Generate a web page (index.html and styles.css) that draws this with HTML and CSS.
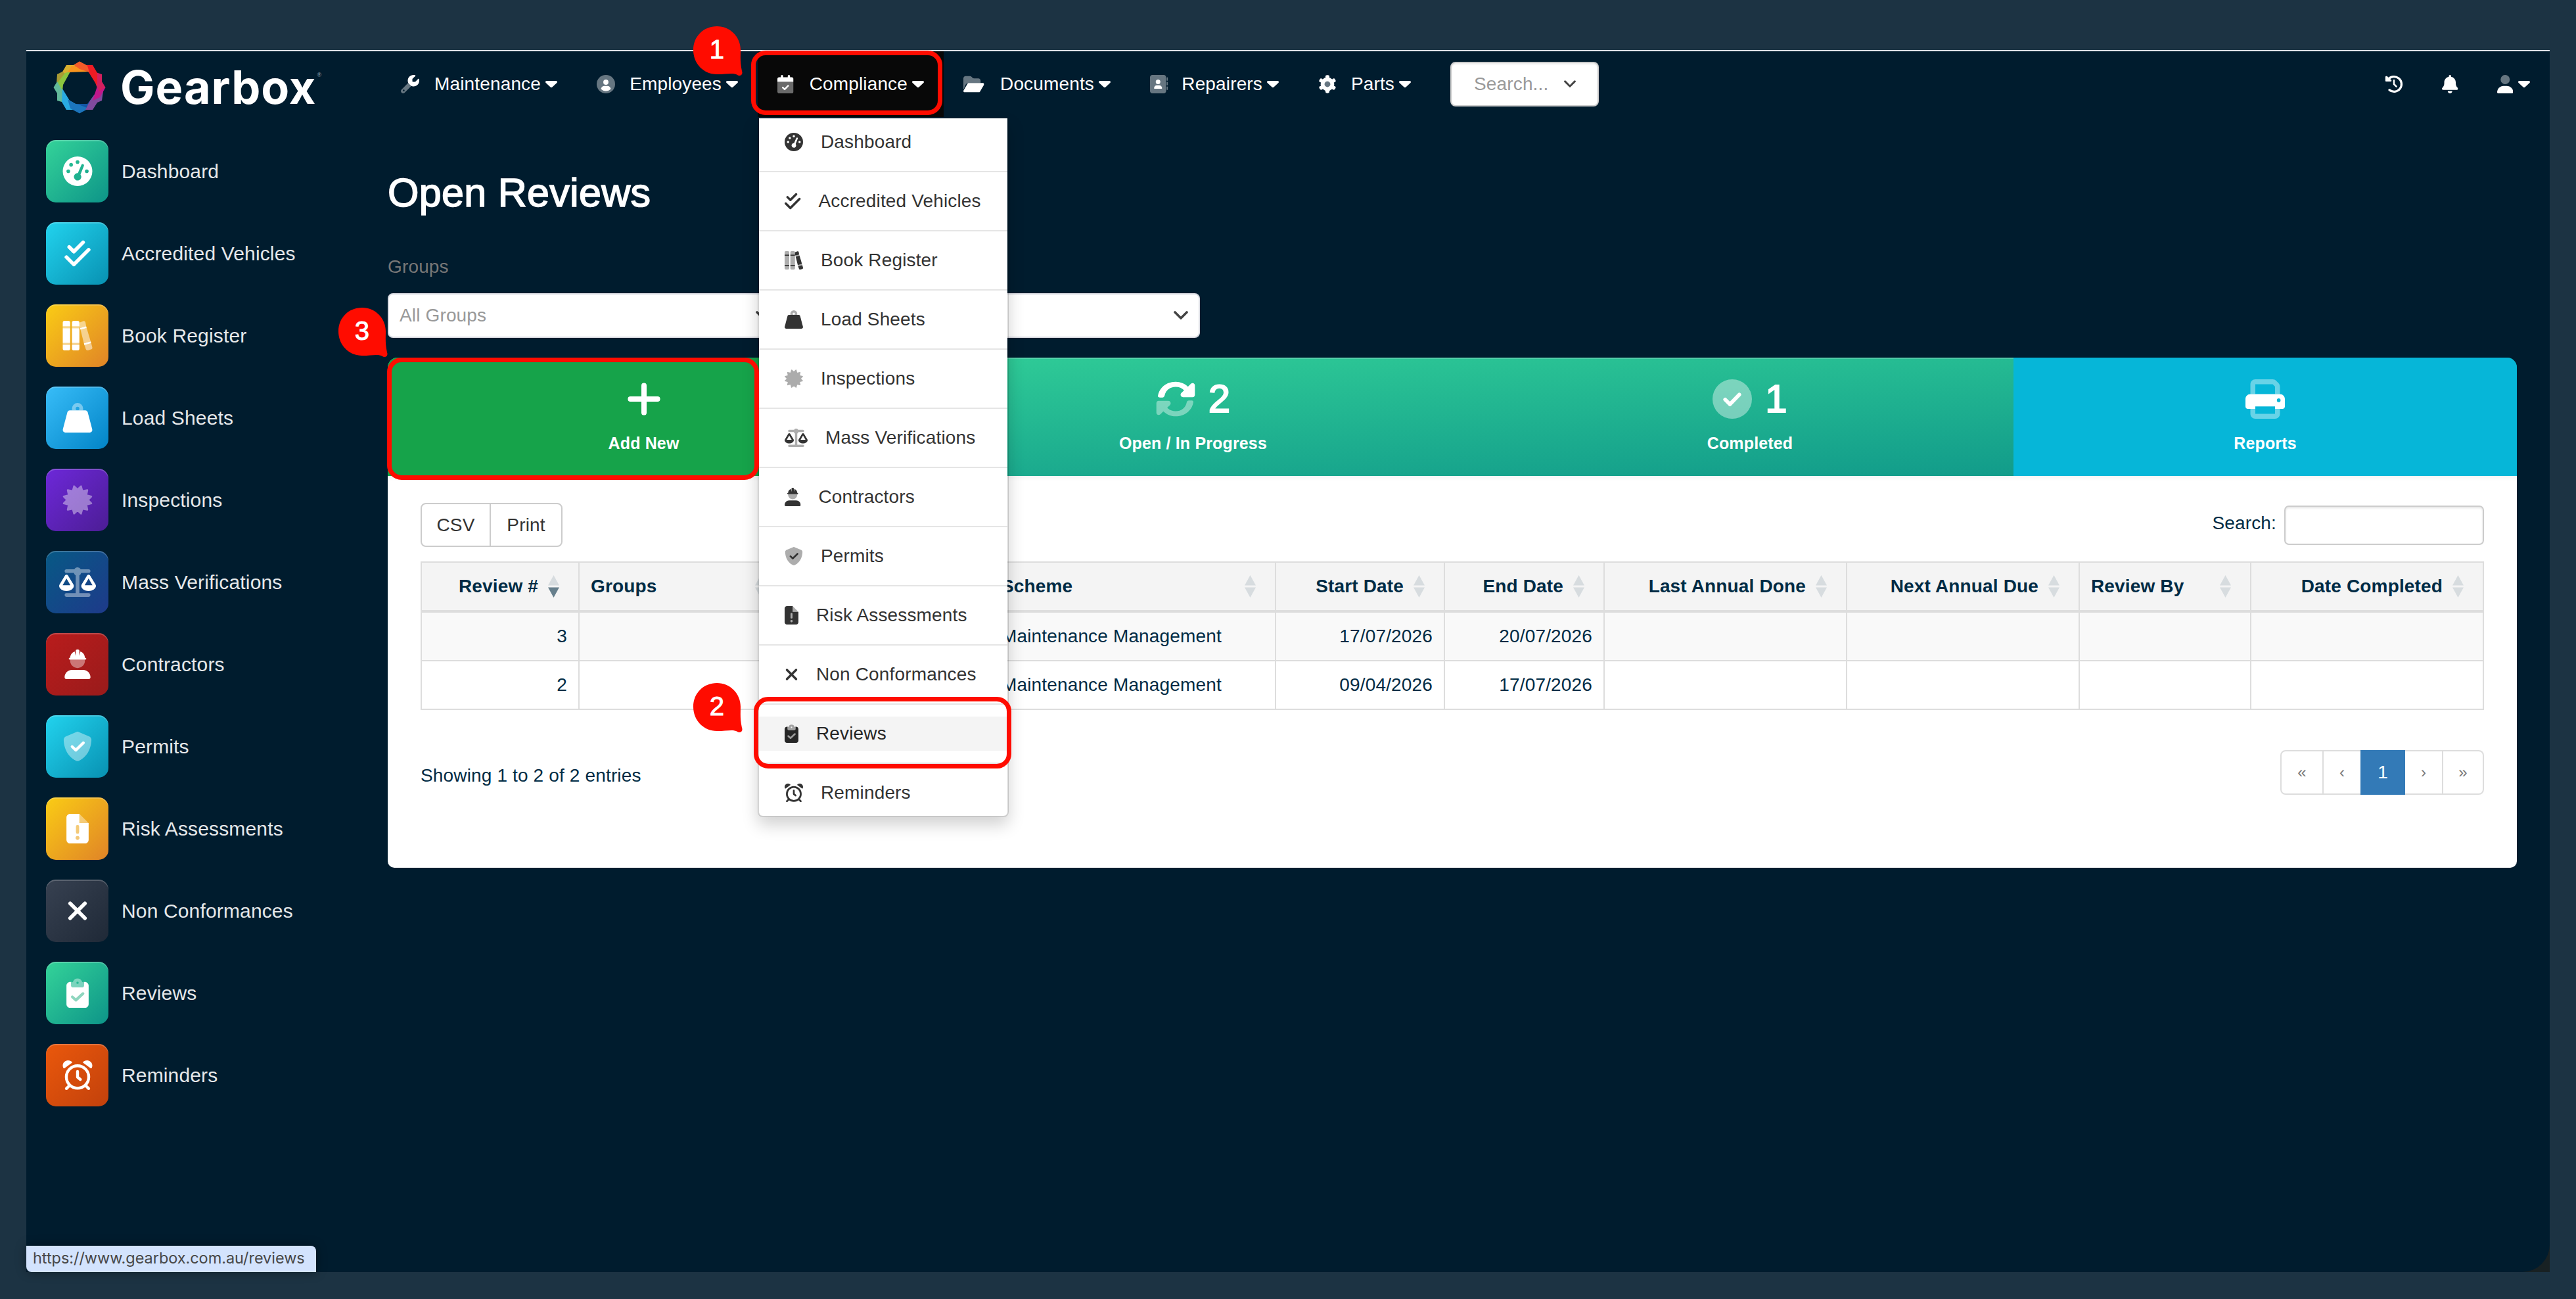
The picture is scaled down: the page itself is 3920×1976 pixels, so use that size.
FILE: index.html
```html
<!DOCTYPE html>
<html lang="en">
<head>
    <meta charset="UTF-8">
    <meta name="viewport" content="width=device-width, initial-scale=1.0">
    <title>Open Reviews - Gearbox</title>
    <link rel="stylesheet" href="styles.css">
</head>
<body>
    <!-- icon set -->
    <svg class="icon-defs" width="0" height="0">
        <symbol id="gauge" viewBox="0 0 512 512"><path fill-rule="evenodd" d="M0 256a256 256 0 1 1 512 0A256 256 0 1 1 0 256zM288 96a32 32 0 1 0-64 0 32 32 0 1 0 64 0zM176 144a32 32 0 1 0-64 0 32 32 0 1 0 64 0zM128 256a32 32 0 1 0-64 0 32 32 0 1 0 64 0zM448 256a32 32 0 1 0-64 0 32 32 0 1 0 64 0zM262 288L323 144a24 24 0 0 1 44 18L307 312A64 64 0 1 1 262 288z"/></symbol>
        <symbol id="check-double" viewBox="0 0 448 512"><path class="line" stroke-width="64" d="M80 144l80 80L320 64M32 320l128 128L416 192"/></symbol>
        <symbol id="books" viewBox="0 0 512 512">
            <path class="layer-a" d="M32 0h64a32 32 0 0 1 32 32v64H0V32A32 32 0 0 1 32 0zM0 128h128v256H0zM0 416h128v64a32 32 0 0 1-32 32H32a32 32 0 0 1-32-32zM192 0h64a32 32 0 0 1 32 32v64H160V32a32 32 0 0 1 32-32zM160 128h128v256H160zM160 416h128v64a32 32 0 0 1-32 32h-64a32 32 0 0 1-32-32zM299 124l106-30 9 31-106 30zM366 390l117-34 9 31-117 34z"/>
            <path class="layer-b" d="M0 96h128v32H0zM0 384h128v32H0zM160 96h128v32H160zM160 384h128v32H160zM288 32l68-27c16-4 32 4 37 22l12 67-106 30-11-30zM308 155l106-30 69 231-117 34zM375 421l117-34 19 70c5 18-6 34-22 39l-52 15c-18 4-34-6-38-22z"/>
        </symbol>
        <symbol id="weight" viewBox="0 0 512 512">
            <path class="fade" fill-rule="evenodd" d="M160 128v-32a96 96 0 1 1 192 0v32zM288 96a32 32 0 1 0-64 0 32 32 0 1 0 64 0z"/>
            <path d="M122 128h268c20 0 36 12 42 32l78 296c6 30-14 56-42 56H44c-28 0-48-26-42-56l78-296c6-20 22-32 42-32z"/>
        </symbol>
        <symbol id="certificate" viewBox="0 0 512 512"><path class="fade" stroke="currentColor" stroke-width="30" stroke-linejoin="round" d="M256 76L316 18 339 104 426 86 408 173 494 196 436 256 494 316 408 339 426 426 339 408 316 494 256 436 196 494 173 408 86 426 104 339 18 316 76 256 18 196 104 173 86 86 173 104 196 18z"/></symbol>
        <symbol id="scale" viewBox="0 0 640 512">
            <path class="fade" d="M128 32h136a64 64 0 0 1 112 0h136a32 32 0 0 1 0 64H384a70 70 0 0 1-32 42v310h160a32 32 0 0 1 0 64H128a32 32 0 0 1 0-64h160V138a70 70 0 0 1-32-42H128a32 32 0 0 1 0-64z"/>
            <path fill-rule="evenodd" d="M128 128c-14 0-24 8-30 18L8 296c-6 10-8 20-8 32 8 48 60 82 128 82s120-34 128-82c0-12-2-22-8-32L158 146c-6-10-16-18-30-18zM128 192l68 118H60zM512 128c-14 0-24 8-30 18l-90 150c-6 10-8 20-8 32 8 48 60 82 128 82s120-34 128-82c0-12-2-22-8-32l-90-150c-6-10-16-18-30-18zM512 192l68 118H444z"/>
        </symbol>
        <symbol id="helmet" viewBox="0 0 448 512">
            <path class="fade" d="M96 176h256v16a128 128 0 0 1-256 0z"/>
            <path d="M192 24a24 24 0 0 1 24-24h16a24 24 0 0 1 24 24v88l18-78c45 18 77 60 77 108 14 0 25 10 25 18s-10 16-20 16H92c-10 0-20-6-20-16s11-18 25-18c0-48 32-90 77-108l18 78zM0 482c0-72 56-130 128-130h192c72 0 128 58 128 130 0 17-13 30-30 30H30c-17 0-30-13-30-30z"/>
        </symbol>
        <symbol id="shield" viewBox="0 0 512 512">
            <path class="fade" d="M256 0c4.600 0 9.200 1 13.400 2.900l188.300 79.900c22 9.300 38.400 31 38.300 57.200-.5 99.200-41.300 280.700-213.600 363.200-16.700 8-36.100 8-52.800 0C57.300 420.700 16.500 239.200 16 140c-.1-26.200 16.300-47.900 38.300-57.200L242.700 2.900C246.800 1 251.400 0 256 0z"/>
            <path class="line" stroke-width="48" d="M162 258l64 62 132-128"/>
        </symbol>
        <symbol id="file" viewBox="0 0 384 512">
            <path fill-rule="evenodd" d="M0 64C0 29 29 0 64 0h160v160h160v288c0 35-29 64-64 64H64c-35 0-64-29-64-64zM192 192a26 26 0 0 0-26 26v100a26 26 0 0 0 52 0V218a26 26 0 0 0-26-26zM224 416a32 32 0 1 0-64 0 32 32 0 1 0 64 0z"/>
            <path class="fade" d="M224 0l160 160H224zM192 192a26 26 0 0 0-26 26v100a26 26 0 0 0 52 0V218a26 26 0 0 0-26-26zM224 416a32 32 0 1 0-64 0 32 32 0 1 0 64 0z"/>
        </symbol>
        <symbol id="xmark" viewBox="0 0 384 512"><path class="line" stroke-width="64" d="M64 128l256 256M320 128L64 384"/></symbol>
        <symbol id="clipboard" viewBox="0 0 384 512">
            <path d="M64 64h22c-4 10-6 22-6 32v28c0 20 16 36 36 36h152c20 0 36-16 36-36V96c0-10-2-22-6-32h22c35 0 64 29 64 64v320c0 35-29 64-64 64H64c-35 0-64-29-64-64V128c0-35 29-64 64-64z"/>
            <path class="fade" fill-rule="evenodd" d="M112 64a84 84 0 0 1 160 0c20 4 32 20 32 40v20c0 20-16 36-36 36H116c-20 0-36-16-36-36v-20c0-20 12-36 32-40zM212 80a20 20 0 1 0-40 0 20 20 0 1 0 40 0z"/>
            <path class="line notch" stroke-width="48" d="M102 324l62 56 122-114"/>
        </symbol>
        <symbol id="alarm" viewBox="0 0 512 512">
            <circle class="line" stroke-width="50" cx="256" cy="288" r="194"/>
            <path class="line" stroke-width="50" d="M256 192v98l48 40M64 488l50-50M448 488l-50-50"/>
            <path d="M160 26C136 8 112 0 92 0 40 0 0 42 0 92c0 14 4 28 10 40 6 8 16 8 24 2L158 42c6-4 8-11 2-16zM352 26c24-18 48-26 68-26 52 0 92 42 92 92 0 14-4 28-10 40-6 8-16 8-24 2L354 42c-6-4-8-11-2-16z"/>
        </symbol>
        <symbol id="wrench" viewBox="0 0 512 512">
            <path class="fade" fill-rule="evenodd" d="M196 230L19 407c-25 25-25 61 0 86s61 25 86 0l177-177zM104 432a24 24 0 1 0-48 0 24 24 0 1 0 48 0z"/>
            <path d="M352 320c88 0 160-72 160-160 0-15-2-30-6-44-3-11-17-14-25-6l-76 77c-4 3-8 5-12 5h-57c-9 0-16-7-16-16v-57c0-4 2-8 5-12l77-76c8-8 5-22-6-25-14-4-29-6-44-6-88 0-160 72-160 160 0 26 6 50 17 72l70 70c22 11 47 18 73 18z"/>
        </symbol>
        <symbol id="circle-user" viewBox="0 0 512 512">
            <circle class="fade" cx="256" cy="256" r="256"/>
            <circle cx="256" cy="200" r="72"/><path d="M118 388c10-50 48-84 98-84h80c50 0 88 34 98 84-34 36-84 60-138 60s-104-24-138-60z"/>
        </symbol>
        <symbol id="calendar" viewBox="0 0 448 512">
            <path class="fade" d="M0 192h448v272c0 27-21 48-48 48H48c-27 0-48-21-48-48z"/>
            <path d="M96 32a32 32 0 0 1 64 0v32h128V32a32 32 0 0 1 64 0v32h48c27 0 48 21 48 48v80H0v-80c0-27 21-48 48-48h48z"/>
            <path class="line" stroke-width="44" d="M148 348l54 52 98-100"/>
        </symbol>
        <symbol id="folder" viewBox="0 0 576 512">
            <path class="fade" d="M0 416V96c0-35 29-64 64-64h117c17 0 33 7 45 19l26 26c12 12 28 19 45 19h119c35 0 64 29 64 64v64H145c-34 0-65 18-82 47z"/>
            <path d="M145 224h400c25 0 40 26 28 48L461 464c-6 10-16 16-28 16H32c-25 0-40-26-28-48l112-192c6-10 17-16 29-16z"/>
        </symbol>
        <symbol id="address-book" viewBox="0 0 512 512">
            <path class="fade" d="M64 0h320c35 0 64 29 64 64v384c0 35-29 64-64 64H64c-35 0-64-29-64-64V64C0 29 29 0 64 0zM480 64c9 0 16 7 16 16v64a16 16 0 0 1-32 0V80c0-9 7-16 16-16zM480 192c9 0 16 7 16 16v64a16 16 0 0 1-32 0v-64c0-9 7-16 16-16zM480 320c9 0 16 7 16 16v64a16 16 0 0 1-32 0v-64c0-9 7-16 16-16z"/>
            <circle cx="224" cy="192" r="64"/><path d="M192 288h64c44 0 80 36 80 80 0 9-7 16-16 16H128c-9 0-16-7-16-16 0-44 36-80 80-80z"/>
        </symbol>
        <symbol id="gear" viewBox="0 0 512 512">
            <circle class="fade" cx="256" cy="256" r="82"/>
            <circle fill="none" stroke="currentColor" stroke-width="110" cx="256" cy="256" r="135"/>
            <g stroke="currentColor" stroke-width="90" stroke-linecap="round"><path d="M244 50h24M244 462h24M83 143l-11 20M440 349l-11 20M72 349l11 20M429 143l11 20"/></g>
        </symbol>
        <symbol id="history" viewBox="0 0 512 512">
            <path class="line" stroke-width="60" d="M92 130a208 208 0 1 1 36 288"/>
            <path class="line" stroke-width="46" d="M256 152v104l66 68"/>
            <path d="M40 34c14-6 26 0 36 10l106 98c14 14 6 42-16 42H42c-14 0-26-12-26-26V56c0-10 10-18 24-22z"/>
        </symbol>
        <symbol id="bell" viewBox="0 0 448 512"><path d="M224 0c-18 0-32 14-32 32v19C119 66 64 131 64 208v19c0 47-17 92-48 127l-8 9c-8 9-10 23-5 34s16 19 29 19h384c13 0 24-7 29-19s3-25-5-34l-8-9c-31-35-48-80-48-127v-19c0-77-55-142-128-157V32c0-18-14-32-32-32zM269 493c12-12 19-28 19-45H160c0 17 7 33 19 45s28 19 45 19 33-7 45-19z"/></symbol>
        <symbol id="user" viewBox="0 0 448 512"><circle class="fade" cx="224" cy="128" r="128"/><path d="M178 304h92c98 0 178 80 178 178 0 17-13 30-30 30H30c-17 0-30-13-30-30 0-98 80-178 178-178z"/></symbol>
        <symbol id="print" viewBox="0 0 512 512">
            <path class="fade" d="M128 0c-35 0-64 29-64 64v128h64V64h226l30 30v98h64V94c0-17-7-33-19-45l-30-30C387 7 371 0 354 0zM64 384v64c0 35 29 64 64 64h256c35 0 64-29 64-64v-64h-64v64H128v-64z"/>
            <path fill-rule="evenodd" d="M64 192h384c35 0 64 29 64 64v96c0 18-14 32-32 32h-96v-32H128v32H32c-18 0-32-14-32-32v-96c0-35 29-64 64-64zM456 272a24 24 0 1 0-48 0 24 24 0 1 0 48 0z"/>
        </symbol>
        <symbol id="refresh" viewBox="0 0 512 512">
            <path d="M26 214C44 106 140 32 256 32c62 0 118 24 160 64l38-38c18-18 52-10 52 20v124c0 16-12 30-30 30H352c-30 0-42-34-22-54l36-36c-28-28-66-44-110-44-72 0-130 44-144 116-3 14-14 22-28 22H54c-18 0-31-6-28-22z"/>
            <path class="fade" d="M486 298C468 406 372 480 256 480c-62 0-118-24-160-64l-38 38c-18 18-52 10-52-20V310c0-16 12-30 30-30h124c30 0 42 34 22 54l-36 36c28 28 66 44 110 44 72 0 130-44 144-116 3-14 14-22 28-22h30c18 0 31 6 28 22z"/>
        </symbol>
        <symbol id="circle-check" viewBox="0 0 512 512"><circle class="fade" cx="256" cy="256" r="256"/><path class="line" stroke-width="48" d="M164 262l62 62 122-126"/></symbol>
        <symbol id="plus" viewBox="0 0 448 512"><path class="line" stroke-width="68" d="M224 80v352M48 256h352"/></symbol>
        <symbol id="caret" viewBox="0 0 18 10"><path d="M2 0h14c2 0 2.500 1.800 1.400 3l-7 6.400c-.8.8-2 .8-2.800 0l-7-6.400C-.5 1.800 0 0 2 0z"/></symbol>
        <symbol id="chevron" viewBox="0 0 22 14"><path class="line" stroke-width="3.600" d="M2 2l9 9 9-9"/></symbol>
        <symbol id="sort" viewBox="0 0 17 34"><path class="up" d="M8.500 0L17 15.500H0z"/><path class="down" d="M0 18.500h17L8.500 34z"/></symbol>
    </svg>

    <div class="screen">
        <div class="app">
            <header class="topbar">
                <a class="brand" href="#">
                    <svg class="brand-ring" viewBox="-40 -40 80 80">
                        <path fill="#e8631f" d="M0-39.500L14-32 15-24-15-24-13-32z"/>
                        <path fill="#d8b02f" d="M-20-34H-6L-16-22-25-8-34-20-27-22z"/>
                        <path fill="#a99b34" d="M-34-20L-26-24-18-18-25-6-35-6z"/>
                        <path fill="#8cc63f" d="M-22-22L-14-24-25-4-26 6-33 8-39 0z"/>
                        <path fill="#f7941e" d="M-12-33L4-30 14-24-18-23z"/>
                        <path fill="#62b99a" d="M-39.500 0L-34-9-22 12-20 24-34 20V9z"/>
                        <path fill="#29abe2" d="M-26 2L-15 20-6 25-8 34H-20L-27 22z"/>
                        <path fill="#1c75bc" d="M-18 18L-6 25 18 26 14 32 0 39.500-14 32z"/>
                        <path fill="#1256a5" d="M-4 25H12L22 12 26 20 14 32z"/>
                        <path fill="#7f4a9e" d="M20 34H9L16 20 26 6 36 6 34 20 27 23z"/>
                        <path fill="#c0188c" d="M39.500 0L31 15 20 20 27-2z"/>
                        <path fill="#d4205f" d="M22-24L34-20V-9L39.500 0 30 6 25-4z"/>
                        <path fill="#ed1c24" d="M8-34H20L27-22 27-2 14-23z"/>
                        <path fill="#f15a29" d="M0-39.500L12-33 15-23 0-28-8-34z"/>
                    </svg>
                    <span class="brand-name">Gearbox</span><sup class="brand-mark">®</sup>
                </a>
                <nav class="nav">
                    <div class="nav-item nav-maintenance"><svg class="icon"><use href="#wrench"/></svg><span>Maintenance</span><svg class="caret"><use href="#caret"/></svg></div>
                    <div class="nav-item nav-employees"><svg class="icon"><use href="#circle-user"/></svg><span>Employees</span><svg class="caret"><use href="#caret"/></svg></div>
                    <div class="nav-item nav-compliance active">
                        <svg class="icon w24"><use href="#calendar"/></svg><span>Compliance</span><svg class="caret"><use href="#caret"/></svg>
                        <ul class="dropdown">
                            <li><a href="#"><svg class="icon"><use href="#gauge"/></svg>Dashboard</a></li>
                            <li><a href="#"><svg class="icon w24"><use href="#check-double"/></svg>Accredited Vehicles</a></li>
                            <li><a href="#"><svg class="icon"><use href="#books"/></svg>Book Register</a></li>
                            <li><a href="#"><svg class="icon"><use href="#weight"/></svg>Load Sheets</a></li>
                            <li><a href="#"><svg class="icon"><use href="#certificate"/></svg>Inspections</a></li>
                            <li><a href="#"><svg class="icon w35"><use href="#scale"/></svg>Mass Verifications</a></li>
                            <li><a href="#"><svg class="icon w24"><use href="#helmet"/></svg>Contractors</a></li>
                            <li><a href="#"><svg class="icon"><use href="#shield"/></svg>Permits</a></li>
                            <li><a href="#"><svg class="icon w21"><use href="#file"/></svg>Risk Assessments</a></li>
                            <li><a href="#"><svg class="icon w21"><use href="#xmark"/></svg>Non Conformances</a></li>
                            <li><a class="hover" href="#"><svg class="icon w21"><use href="#clipboard"/></svg>Reviews</a></li>
                            <li><a href="#"><svg class="icon"><use href="#alarm"/></svg>Reminders</a></li>
                        </ul>
                    </div>
                    <div class="nav-item nav-documents"><svg class="icon w32"><use href="#folder"/></svg><span>Documents</span><svg class="caret"><use href="#caret"/></svg></div>
                    <div class="nav-item nav-repairers"><svg class="icon"><use href="#address-book"/></svg><span>Repairers</span><svg class="caret"><use href="#caret"/></svg></div>
                    <div class="nav-item nav-parts"><svg class="icon"><use href="#gear"/></svg><span>Parts</span><svg class="caret"><use href="#caret"/></svg></div>
                    <div class="nav-search"><span>Search...</span><svg class="chevron"><use href="#chevron"/></svg></div>
                </nav>
                <div class="tools">
                    <svg class="icon"><use href="#history"/></svg>
                    <svg class="icon w24"><use href="#bell"/></svg>
                    <div class="account"><svg class="icon w24"><use href="#user"/></svg><svg class="caret"><use href="#caret"/></svg></div>
                </div>
            </header>

            <div class="layout">
                <aside class="sidebar">
                    <a href="#"><i class="tile green"><svg><use href="#gauge"/></svg></i>Dashboard</a>
                    <a href="#"><i class="tile cyan"><svg><use href="#check-double"/></svg></i>Accredited Vehicles</a>
                    <a href="#"><i class="tile yellow"><svg><use href="#books"/></svg></i>Book Register</a>
                    <a href="#"><i class="tile sky"><svg><use href="#weight"/></svg></i>Load Sheets</a>
                    <a href="#"><i class="tile purple"><svg><use href="#certificate"/></svg></i>Inspections</a>
                    <a href="#"><i class="tile navy"><svg><use href="#scale"/></svg></i>Mass Verifications</a>
                    <a href="#"><i class="tile red"><svg><use href="#helmet"/></svg></i>Contractors</a>
                    <a href="#"><i class="tile cyan"><svg><use href="#shield"/></svg></i>Permits</a>
                    <a href="#"><i class="tile yellow"><svg><use href="#file"/></svg></i>Risk Assessments</a>
                    <a href="#"><i class="tile slate"><svg><use href="#xmark"/></svg></i>Non Conformances</a>
                    <a href="#"><i class="tile green"><svg class="mint"><use href="#clipboard"/></svg></i>Reviews</a>
                    <a href="#"><i class="tile orange"><svg><use href="#alarm"/></svg></i>Reminders</a>
                </aside>

                <main class="main">
                    <h1>Open Reviews</h1>
                    <label class="filter-label">Groups</label>
                    <div class="filters">
                        <div class="select"><span>All Groups</span><svg class="chevron"><use href="#chevron"/></svg></div>
                        <div class="select"><span></span><svg class="chevron"><use href="#chevron"/></svg></div>
                    </div>

                    <div class="cards">
                        <div class="card card-add"><div class="card-top"><svg class="card-icon"><use href="#plus"/></svg></div><b>Add New</b></div>
                        <div class="card card-open"><div class="card-top"><svg class="card-icon"><use href="#refresh"/></svg><span>2</span></div><b>Open / In Progress</b></div>
                        <div class="card card-done"><div class="card-top"><svg class="card-icon"><use href="#circle-check"/></svg><span>1</span></div><b>Completed</b></div>
                        <div class="card card-reports"><div class="card-top"><svg class="card-icon"><use href="#print"/></svg></div><b>Reports</b></div>
                    </div>

                    <section class="panel">
                        <div class="toolbar">
                            <div class="btn-group"><button>CSV</button><button>Print</button></div>
                            <label class="search">Search: <input type="text"></label>
                        </div>
                        <table class="reviews">
                            <colgroup><col class="c1"><col class="c2"><col class="c3"><col class="c4"><col class="c5"><col class="c6"><col class="c7"><col class="c8"><col class="c9"><col class="c10"></colgroup>
                            <thead>
                                <tr>
                                    <th class="num"><div>Review #<svg class="sort desc"><use href="#sort"/></svg></div></th>
                                    <th><div>Groups<svg class="sort"><use href="#sort"/></svg></div></th>
                                    <th></th>
                                    <th><div>Scheme<svg class="sort"><use href="#sort"/></svg></div></th>
                                    <th class="num"><div>Start Date<svg class="sort"><use href="#sort"/></svg></div></th>
                                    <th class="num"><div>End Date<svg class="sort"><use href="#sort"/></svg></div></th>
                                    <th class="num"><div>Last Annual Done<svg class="sort"><use href="#sort"/></svg></div></th>
                                    <th class="num"><div>Next Annual Due<svg class="sort"><use href="#sort"/></svg></div></th>
                                    <th><div>Review By<svg class="sort"><use href="#sort"/></svg></div></th>
                                    <th class="num"><div>Date Completed<svg class="sort"><use href="#sort"/></svg></div></th>
                                </tr>
                            </thead>
                            <tbody>
                                <tr><td class="num">3</td><td></td><td></td><td>Maintenance Management</td><td class="num">17/07/2026</td><td class="num">20/07/2026</td><td></td><td></td><td></td><td></td></tr>
                                <tr><td class="num">2</td><td></td><td></td><td>Maintenance Management</td><td class="num">09/04/2026</td><td class="num">17/07/2026</td><td></td><td></td><td></td><td></td></tr>
                            </tbody>
                        </table>
                        <div class="table-footer">
                            <span>Showing 1 to 2 of 2 entries</span>
                            <ul class="pagination"><li class="wide">«</li><li>‹</li><li class="current">1</li><li>›</li><li class="wide">»</li></ul>
                        </div>
                    </section>
                </main>
            </div>
            <div class="status-url">https://www.gearbox.com.au/reviews</div>
        </div>
    </div>

    <!-- numbered steps -->
    <div class="step-box box-1"></div>
    <div class="step-box box-2"></div>
    <div class="step-box box-3"></div>
    <div class="step step-1"><svg viewBox="0 0 75 75"><path d="M36 0C56 0 72 16 72 36c0 10-1 18 2 32 2 5-2 9-7 6-6-4-16-1-31-1C16 73 0 57 0 36S16 0 36 0z"/></svg><span>1</span></div>
    <div class="step step-2"><svg viewBox="0 0 75 75"><path d="M36 0C56 0 72 16 72 36c0 10-1 18 2 32 2 5-2 9-7 6-6-4-16-1-31-1C16 73 0 57 0 36S16 0 36 0z"/></svg><span>2</span></div>
    <div class="step step-3"><svg viewBox="0 0 75 75"><path d="M36 0C56 0 72 16 72 36c0 10-1 18 2 32 2 5-2 9-7 6-6-4-16-1-31-1C16 73 0 57 0 36S16 0 36 0z"/></svg><span>3</span></div>
</body>
</html>
```
FILE: styles.css
```css
* {
    box-sizing: border-box;
}

body {
    margin: 0;
    padding: 76px 40px 0;
    height: 1976px;
    overflow: hidden;
    position: relative;
    background-color: #1c3343;
    font-family: "Liberation Sans", Arial, sans-serif;
    font-size: 28px;
    letter-spacing: 0.15px;
    color: #002b44;
}

a {
    color: inherit;
    text-decoration: none;
}

ul {
    list-style: none;
    margin: 0;
    padding: 0;
}

svg {
    fill: currentColor;
    flex: none;
    display: block;
}

.icon-defs {
    position: absolute;
}

.line {
    fill: none;
    stroke: currentColor;
    stroke-linecap: round;
    stroke-linejoin: round;
}

.fade {
    opacity: 0.4;
}

.layer-a {
    opacity: var(--a, 0.4);
}

.layer-b {
    opacity: var(--b, 1);
}

.notch {
    stroke: var(--notch, #9b9b9b);
}

.icon {
    width: 28px;
    height: 28px;
}

.w21 { width: 21px; }
.w24 { width: 24.5px; }
.w32 { width: 31.5px; }
.w35 { width: 35px; }

.caret {
    width: 18px;
    height: 10px;
}

.chevron {
    width: 22px;
    height: 14px;
    color: #444;
}

.screen {
    background-color: #182123;
    height: 1859px;
}

.app {
    height: 1859px;
    position: relative;
    background-color: #001c2e;
    border-top: 2px solid #dfe2e8;
    border-bottom-right-radius: 42px;
}

/* top bar */
.topbar {
    display: flex;
    height: 100px;
    color: #fff;
}

.brand {
    width: 540px;
    padding: 15px 0 0 41px;
    display: flex;
}

.brand-ring {
    width: 80px;
    height: 80px;
}

.brand-name {
    margin-left: 22px;
    font-family: Inter, sans-serif;
    font-weight: 700;
    font-size: 70px;
    line-height: 80px;
    letter-spacing: 1px;
}

.brand-mark {
    margin: 16px 0 0 1px;
    font-size: 9px;
    line-height: 10px;
    color: #9aa3ab;
}

.nav {
    display: flex;
    flex: 1;
}

.nav-item {
    position: relative;
    display: flex;
    align-items: center;
    justify-content: space-between;
    padding: 0 30px;
}

.nav-item > span {
    margin-left: auto;
    margin-right: 7px;
}

.nav-maintenance { width: 298px; }
.nav-employees { width: 275px; }
.nav-compliance { width: 283px; }
.nav-documents { width: 284px; }
.nav-repairers { width: 256px; }
.nav-parts { width: 201px; }

.nav-item.active {
    background-color: #080808;
}

.nav-search {
    margin: 16px 0 0 30px;
    width: 226px;
    height: 68px;
    display: flex;
    align-items: center;
    justify-content: space-between;
    padding: 0 33px 0 34px;
    background-color: #fff;
    border: 2px solid #ccc;
    border-radius: 8px;
    color: #999;
    box-shadow: inset 0 2px 2px rgba(0, 0, 0, 0.08);
}

.nav-search .chevron {
    width: 18px;
}

.tools {
    display: flex;
    align-items: center;
    gap: 59px;
    padding-right: 30px;
}

.account {
    display: flex;
    align-items: center;
    gap: 8px;
}

.dropdown {
    position: absolute;
    z-index: 5;
    top: 102px;
    left: 0;
    width: 382px;
    height: 1063px;
    padding: 10px 0;
    background-color: #fff;
    background-clip: padding-box;
    border: 2px solid rgba(0, 0, 0, 0.15);
    border-top: 0;
    border-radius: 0 0 8px 8px;
    box-shadow: 0 12px 24px rgba(0, 0, 0, 0.18);
    color: #333;
}

.dropdown li {
    padding-bottom: 18px;
}

.dropdown li + li {
    border-top: 2px solid #e5e5e5;
    padding-top: 18px;
}

.dropdown a {
    display: flex;
    align-items: center;
    gap: 27px;
    height: 52px;
    padding-left: 39px;
    white-space: nowrap;
}

.dropdown a.hover {
    background-color: #f4f4f4;
    color: #262626;
}

/* sidebar */
.layout {
    display: flex;
}

.sidebar {
    width: 550px;
    padding: 35px 0 0 30px;
    display: flex;
    flex-direction: column;
    gap: 30px;
    font-size: 30px;
    color: #e5e8ea;
}

.sidebar a {
    display: flex;
    align-items: center;
    gap: 20px;
    height: 95px;
}

.tile {
    width: 95px;
    height: 95px;
    border-radius: 15px;
    display: flex;
    align-items: center;
    justify-content: center;
    color: #fff;
    box-shadow: inset 0 2px 0 rgba(255, 255, 255, 0.2);
    --a: 1;
    --b: 0.5;
}

.tile svg {
    width: 56px;
    height: 45px;
}

.tile .fade {
    opacity: 0.5;
}

.mint {
    --notch: #8fd6bf;
}

.green { background-image: linear-gradient(135deg, #34d399, #0d9488); }
.cyan { background-image: linear-gradient(135deg, #22d3ee, #0891b2); }
.yellow { background-image: linear-gradient(135deg, #facc15, #e08427); }
.sky { background-image: linear-gradient(135deg, #38bdf8, #0284c7); }
.purple { background-image: linear-gradient(135deg, #6d28d9, #4c1d95); }
.navy { background-image: linear-gradient(135deg, #075985, #1e3a8a); }
.red { background-image: linear-gradient(135deg, #b91c1c, #991b1b); }
.slate { background-image: linear-gradient(135deg, #374151, #1f2937); }
.orange { background-image: linear-gradient(135deg, #ea580c, #c2410c); }

/* main */
.main {
    width: 3240px;
    padding-top: 82px;
}

h1 {
    margin: 0 0 60px;
    font-size: 61px;
    font-weight: 400;
    line-height: 66px;
    letter-spacing: 0.3px;
    color: #fff;
    -webkit-text-stroke: 1.6px #fff;
}

.filter-label {
    display: block;
    line-height: 40px;
    color: #777;
}

.filters {
    display: flex;
    gap: 36px;
    margin: 20px 0 30px;
}

.select {
    width: 600px;
    height: 68px;
    display: flex;
    align-items: center;
    justify-content: space-between;
    padding: 0 16px;
    background-color: #fff;
    border: 2px solid #d9dbe2;
    border-radius: 8px;
    color: #999;
}

.cards {
    display: flex;
    height: 180px;
    color: #fff;
    border-radius: 15px 15px 0 0;
    overflow: hidden;
    background-image: linear-gradient(to bottom right, #34d399, #0d9488);
    font-size: 25px;
}

.card {
    display: flex;
    flex-direction: column;
    align-items: center;
    box-shadow: inset 0 2px 0 rgba(255, 255, 255, 0.2);
}

.card-top {
    display: flex;
    align-items: center;
    gap: 20px;
    height: 85px;
    margin: 20px 0 9px;
    font-size: 60px;
    -webkit-text-stroke: 2px #fff;
}

.card-top svg {
    -webkit-text-stroke: 0;
}

.card b {
    line-height: 32px;
}

.card-icon {
    width: 60px;
    height: 60px;
}

.card .fade {
    opacity: 0.5;
}

.card-add {
    width: 779px;
    background-color: #16a34a;
    box-shadow: none;
}

.card-open { width: 893px; }
.card-done { width: 802px; }

.card-reports {
    width: 766px;
    background-color: #06b6d8;
    box-shadow: none;
}

.panel {
    height: 596px;
    padding: 41px 50px 0;
    background-color: #fff;
    border-radius: 0 0 10px 10px;
    box-shadow: inset 0 6px 6px -4px rgba(0, 0, 0, 0.06);
}

.toolbar {
    display: flex;
    justify-content: space-between;
    height: 67px;
    margin-bottom: 22px;
}

.btn-group {
    display: flex;
}

.btn-group button {
    height: 67px;
    width: 107px;
    padding: 0;
    font: inherit;
    letter-spacing: inherit;
    color: #333;
    background-color: #fff;
    border: 2px solid #ccc;
    border-radius: 8px 0 0 8px;
}

.btn-group button + button {
    width: 111px;
    margin-left: -2px;
    border-radius: 0 8px 8px 0;
}

.search {
    display: flex;
    align-items: center;
    gap: 12px;
    height: 62px;
}

.search input {
    width: 304px;
    height: 60px;
    margin-top: 5px;
    border: 2px solid #ccc;
    border-radius: 7px;
    box-shadow: inset 0 2px 3px rgba(0, 0, 0, 0.1);
}

.reviews {
    width: 3140px;
    table-layout: fixed;
    border-collapse: separate;
    border-spacing: 0;
    border: solid #ddd;
    border-width: 2px 0 0 2px;
}

.c1 { width: 240px; }
.c2 { width: 315px; }
.c3 { width: 310px; }
.c4 { width: 435px; }
.c5 { width: 257px; }
.c6 { width: 243px; }
.c7 { width: 369px; }
.c8 { width: 354px; }
.c9 { width: 261px; }
.c10 { width: 354px; }

.reviews th,
.reviews td {
    height: 74px;
    padding: 0 17px;
    text-align: left;
    border: solid #ddd;
    border-width: 0 2px 2px 0;
}

.reviews th {
    height: 76px;
    padding-right: 29px;
    background-color: #f4f4f4;
    border-bottom-width: 4px;
}

.reviews th div {
    display: flex;
    align-items: center;
    justify-content: space-between;
    white-space: nowrap;
}

.reviews th.num div {
    justify-content: flex-end;
    gap: 15px;
}

.reviews td.num {
    text-align: right;
}

.reviews tbody tr:first-child td {
    background-color: #f9f9f9;
}

.sort {
    width: 17px;
    height: 34px;
    color: #d7dcdf;
    --down: #d7dcdf;
}

.sort.desc {
    --down: #667f8c;
}

.down {
    fill: var(--down);
}

.table-footer {
    display: flex;
    justify-content: space-between;
    margin-top: 61px;
}

.table-footer > span {
    padding-top: 23px;
}

.pagination {
    display: flex;
    height: 68px;
    border: 2px solid #ddd;
    border-radius: 8px;
    color: #777;
    font-size: 24px;
}

.pagination li {
    display: flex;
    align-items: center;
    justify-content: center;
    width: 56px;
}

.pagination li.wide {
    width: 62px;
}

.pagination li:last-child {
    border-left: 2px solid #ddd;
}

.pagination li:first-child {
    width: 64px;
    border-right: 2px solid #ddd;
}

.pagination li.current {
    width: 68px;
    margin: -2px 0;
    background-color: #337ab7;
    color: #fff;
    font-size: 28px;
}

.status-url {
    position: absolute;
    left: 0;
    bottom: 0;
    height: 40px;
    width: 441px;
    padding-left: 10px;
    line-height: 38px;
    letter-spacing: -0.05px;
    background-color: #d3e3fd;
    border-radius: 0 8px 0 8px;
    box-shadow: 0 0 16px rgba(0, 0, 0, 0.4);
    color: #474747;
    font-family: Inter, sans-serif;
    font-size: 23.5px;
    white-space: nowrap;
}

/* numbered steps over the page */
.step-box {
    position: absolute;
    z-index: 10;
    border: 7px solid #ff0c00;
    border-radius: 22px;
}

.box-1 {
    left: 1143px;
    top: 77px;
    width: 291px;
    height: 98px;
}

.box-2 {
    left: 1147px;
    top: 1060px;
    width: 392px;
    height: 109px;
}

.box-3 {
    left: 589px;
    top: 544px;
    width: 566px;
    height: 186px;
}

.step {
    position: absolute;
    z-index: 11;
    width: 75px;
    height: 75px;
    color: #ff0c00;
}

.step span {
    position: absolute;
    left: 0;
    top: 0;
    width: 72px;
    line-height: 70px;
    text-align: center;
    color: #fff;
    font-size: 40px;
    -webkit-text-stroke: 1px #fff;
}

.step-1 {
    left: 1055px;
    top: 40px;
}

.step-2 {
    left: 1055px;
    top: 1039px;
}

.step-3 {
    left: 515px;
    top: 468px;
}
```
